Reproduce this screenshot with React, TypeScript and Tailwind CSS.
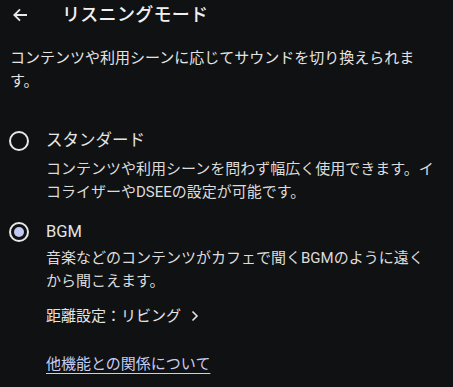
import React from 'react';

const font = { fontFamily: 'Roboto, "Noto Sans CJK JP", sans-serif' };

const Radio: React.FC<{ checked?: boolean }> = ({ checked }) => (
  <span className="w-[20px] h-[20px] rounded-full border-2 border-[#e8e8e8] flex items-center justify-center shrink-0">
    {checked && <span className="w-[10px] h-[10px] rounded-full bg-[#c2c8f4]" />}
  </span>
);

export default function App() {
  return (
    <div className="w-[453px] h-[387px] bg-[#0f1112] text-[#e4e4e4] overflow-hidden" style={font}>
      {/* Header */}
      <div className="flex items-center h-[29px] pl-[13px]">
        <svg width="15" height="14" viewBox="0 0 15 14" fill="none" stroke="#e8e8e8" strokeWidth="1.8">
          <path d="M14 7H1.5M7 1.3 1.3 7 7 12.7" />
        </svg>
        <span className="ml-[34px] text-[18px] font-medium tracking-[0.3px] text-[#f0f0f0]">リスニングモード</span>
      </div>

      {/* Description */}
      <p className="mt-[18px] px-[10px] text-[15px] leading-[23px] whitespace-nowrap">
        コンテンツや利用シーンに応じてサウンドを切り換えられま
        <br />
        す。
      </p>

      {/* Standard */}
      <div className="mt-[36px] flex items-center h-[24px] pl-[9px]">
        <Radio />
        <span className="ml-[17px] text-[16.5px]">スタンダード</span>
      </div>
      <p className="mt-[5px] pl-[46px] text-[15px] leading-[23px] whitespace-nowrap text-[#dcdcdc]">
        コンテンツや利用シーンを問わず幅広く使用できます。イ
        <br />
        コライザーやDSEEの設定が可能です。
      </p>

      {/* BGM */}
      <div className="mt-[16px] flex items-center h-[24px] pl-[9px]">
        <Radio checked />
        <span className="ml-[17px] text-[16.5px]">BGM</span>
      </div>
      <p className="mt-[3px] pl-[46px] text-[15px] leading-[23px] whitespace-nowrap text-[#dcdcdc]">
        音楽などのコンテンツがカフェで聞くBGMのように遠く
        <br />
        から聞こえます。
      </p>

      <div className="mt-[11px] pl-[46px] flex items-center h-[24px] text-[15px]">
        <span>距離設定：リビング</span>
        <svg className="ml-[10px]" width="8" height="12" viewBox="0 0 8 12" fill="none" stroke="#e4e4e4" strokeWidth="1.6">
          <path d="M1.5 1.5 6 6l-4.5 4.5" />
        </svg>
      </div>

      <div className="mt-[24px] pl-[46px] h-[24px] flex items-center">
        <a className="text-[15px] text-[#c8cdf2] underline underline-offset-[4px] decoration-1">他機能との関係について</a>
      </div>
    </div>
  );
}
